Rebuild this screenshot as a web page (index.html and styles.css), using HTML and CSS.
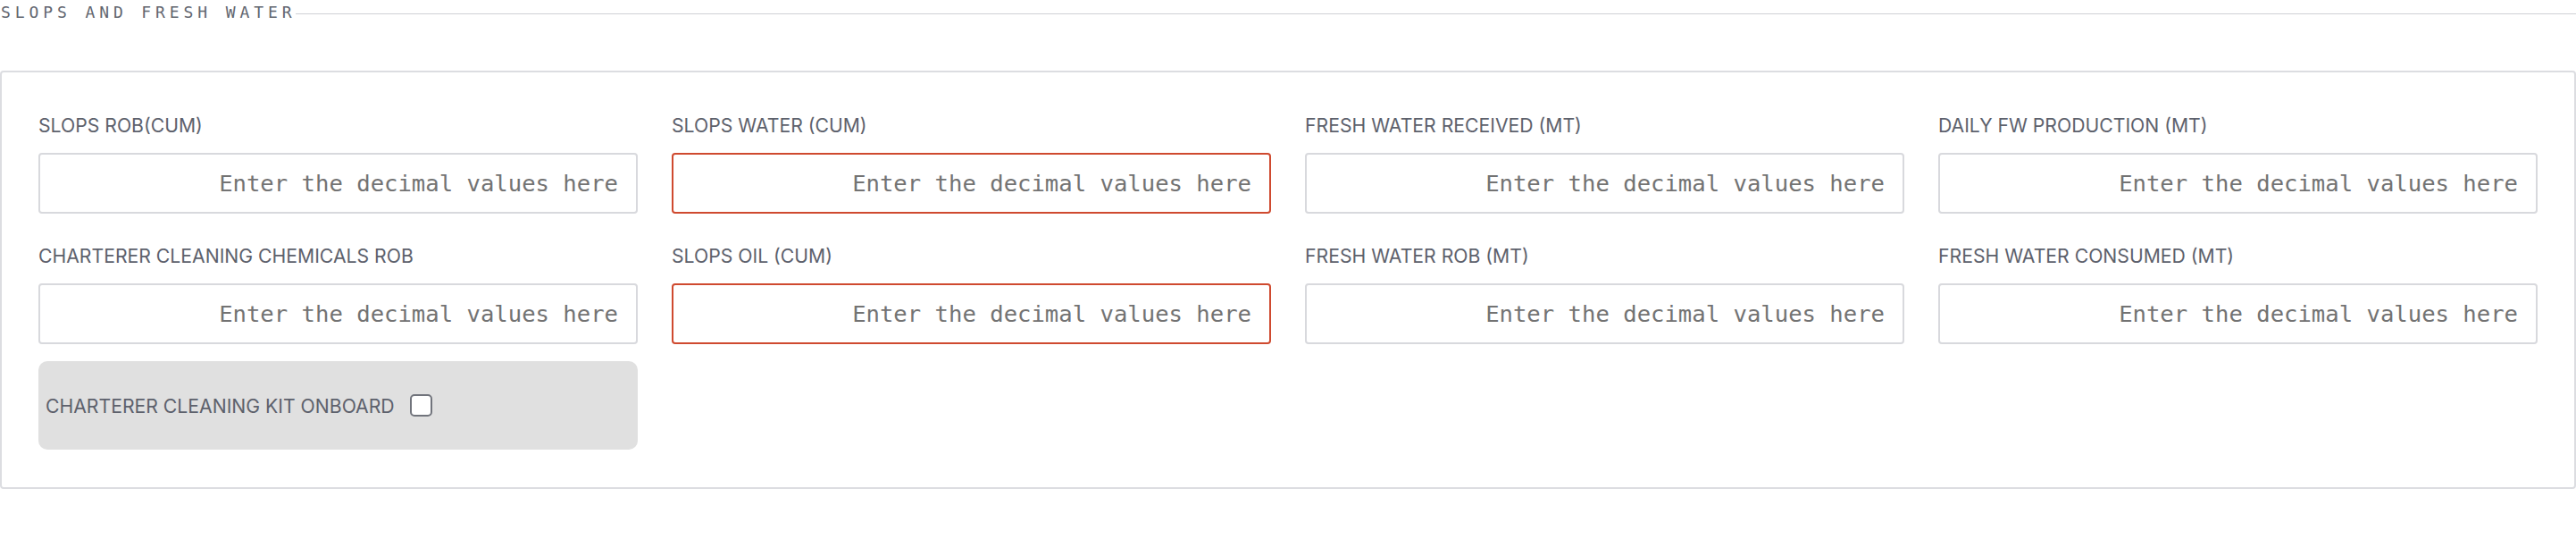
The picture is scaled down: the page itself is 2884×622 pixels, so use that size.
FILE: index.html
```html
<!DOCTYPE html>
<html>
<head>
<meta charset="utf-8">
<link rel="stylesheet" href="styles.css">
</head>
<body>
<div class="section-header">
  <span class="section-title">SLOPS AND FRESH WATER</span>
  <span class="section-rule"></span>
</div>
<div class="card">
  <div class="grid">
    <div class="field">
      <label class="field-label">SLOPS ROB(CUM)</label>
      <input class="field-input" type="text" placeholder="Enter the decimal values here">
    </div>
    <div class="field">
      <label class="field-label">SLOPS WATER (CUM)</label>
      <input class="field-input error" type="text" placeholder="Enter the decimal values here">
    </div>
    <div class="field">
      <label class="field-label">FRESH WATER RECEIVED (MT)</label>
      <input class="field-input" type="text" placeholder="Enter the decimal values here">
    </div>
    <div class="field">
      <label class="field-label">DAILY FW PRODUCTION (MT)</label>
      <input class="field-input" type="text" placeholder="Enter the decimal values here">
    </div>
    <div class="field">
      <label class="field-label">CHARTERER CLEANING CHEMICALS ROB</label>
      <input class="field-input" type="text" placeholder="Enter the decimal values here">
    </div>
    <div class="field">
      <label class="field-label">SLOPS OIL (CUM)</label>
      <input class="field-input error" type="text" placeholder="Enter the decimal values here">
    </div>
    <div class="field">
      <label class="field-label">FRESH WATER ROB (MT)</label>
      <input class="field-input" type="text" placeholder="Enter the decimal values here">
    </div>
    <div class="field">
      <label class="field-label">FRESH WATER CONSUMED (MT)</label>
      <input class="field-input" type="text" placeholder="Enter the decimal values here">
    </div>
    <div class="check-box">
      <span class="check-label">CHARTERER CLEANING KIT ONBOARD</span>
      <span class="check"></span>
    </div>
  </div>
</div>
</body>
</html>
```
FILE: styles.css
```css
* { box-sizing: border-box; }
html, body { margin: 0; padding: 0; background: #ffffff; }
body { width: 2884px; font-family: Inter, "Noto Sans", sans-serif; }

.section-header {
  display: flex;
  align-items: center;
  height: 28px;
}
.section-title {
  font-family: "DejaVu Sans Mono", "Liberation Mono", monospace;
  font-size: 18px;
  line-height: 24px;
  letter-spacing: 4.9px;
  color: #62666f;
  padding-left: 1px;
  white-space: nowrap;
}
.section-rule {
  flex: 1;
  height: 1px;
  background: #cfd0d5;
  margin-top: 3px;
}

.card {
  margin-top: 51px;
  border: 2px solid #dcdde1;
  border-radius: 4px;
  padding: 31px 41px 42px 41px;
}
.grid {
  display: grid;
  grid-template-columns: repeat(4, 1fr);
  column-gap: 38px;
  row-gap: 19px;
}
.field { display: flex; flex-direction: column; }
.field-label {
  font-size: 21.2px;
  line-height: 24px;
  color: #5d616c;
  margin-top: 16px;
  margin-bottom: 19px;
  white-space: nowrap;
}
.field-input {
  height: 68px;
  border: 2px solid #d8d9dd;
  border-radius: 4px;
  padding: 0 20px 0 12px;
  text-align: right;
  font-family: "DejaVu Sans Mono", "Liberation Mono", monospace;
  font-size: 25.6px;
  color: #333;
  background: #fff;
  outline: none;
}
.field-input::placeholder { color: #737373; opacity: 1; }
.field-input.error { border-color: #cf4a2f; }

.check-box {
  height: 99px;
  background: #e0e0e0;
  border-radius: 10px;
  display: flex;
  align-items: center;
  padding-left: 8px;
}
.check-label {
  font-size: 21.2px;
  line-height: 24px;
  color: #5d616c;
  white-space: nowrap;
}
.check {
  width: 25px;
  height: 25px;
  margin-left: 17px;
  border: 2px solid #71747c;
  border-radius: 5px;
  background: #ffffff;
}
```
